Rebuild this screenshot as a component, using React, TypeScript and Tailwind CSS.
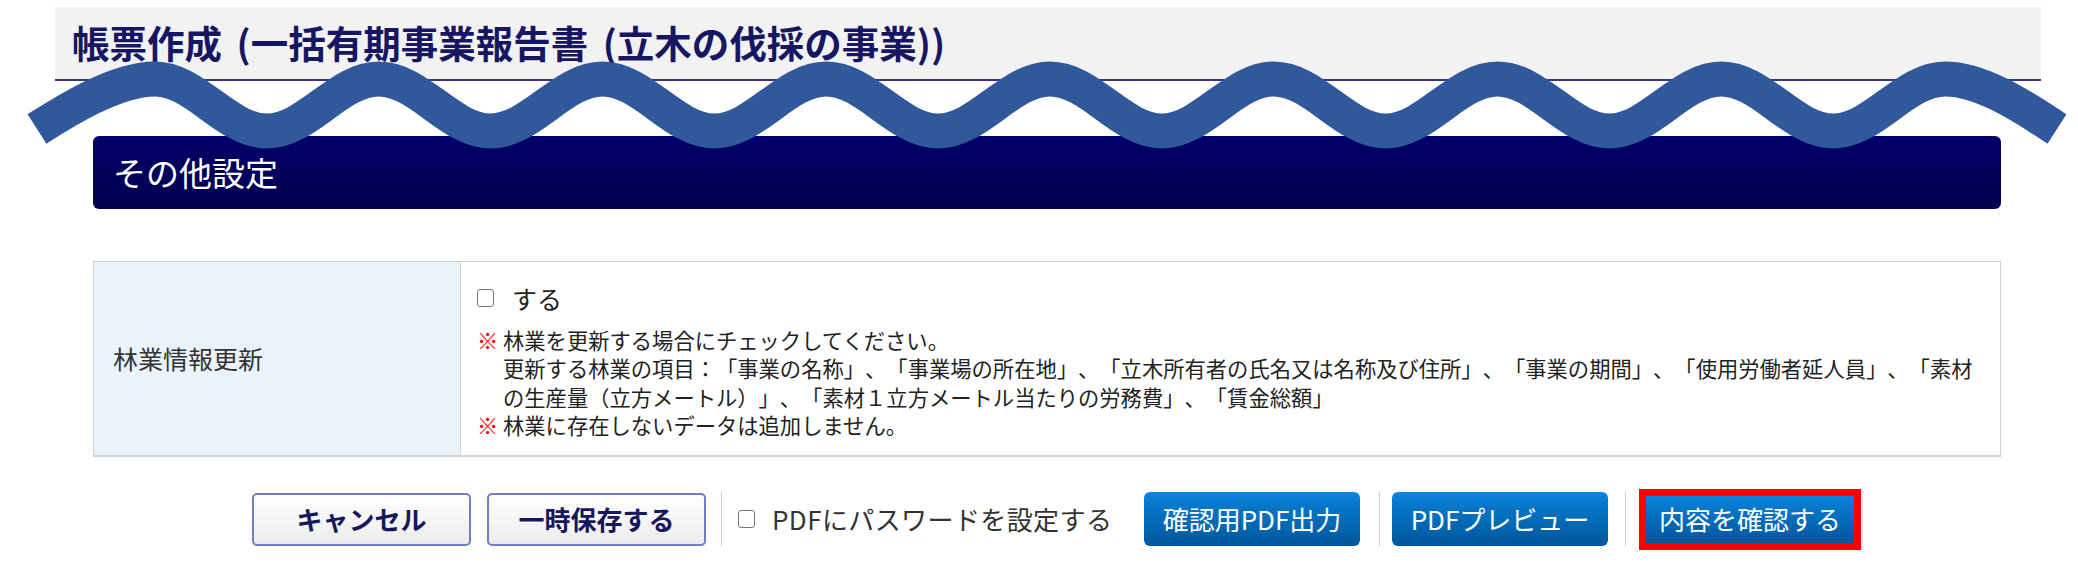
import React from "react";

const jp = { fontFamily: '"Noto Sans CJK JP", "Noto Sans", sans-serif' };

// wave drawn across the header (cut mark)
const buildWave = () => {
  const peaks = Array.from({ length: 9 }, (_, i) => 155 + 223.75 * i);
  let d = "M 37 129 C 62 113, 115 79, 155 79";
  for (let i = 0; i < 8; i++) {
    const p = peaks[i];
    const t = p + 111.875;
    const n = peaks[i + 1];
    d += ` C ${p + 40.6} 79, ${t - 40.6} 131, ${t} 131 C ${t + 40.6} 131, ${n - 40.6} 79, ${n} 79`;
  }
  d += " C 1985 79, 2032 113, 2057 129";
  return d;
};

const Wave = () => (
  <svg
    className="absolute left-0 top-0 pointer-events-none"
    width="2078"
    height="200"
    viewBox="0 0 2078 200"
  >
    <path d={buildWave()} fill="none" stroke="#30589a" strokeWidth="35" strokeLinecap="butt" />
  </svg>
);

const Box = () => (
  <span className="inline-block w-[17px] h-[18px] border border-[#767676] rounded-[3px] bg-white shrink-0" />
);

const GrayButton = ({ label }: { label: string }) => (
  <button className="w-[219px] h-[53px] rounded-[5px] border-2 border-[#6f7fc6] bg-gradient-to-b from-white to-[#ececec] text-[26px] font-bold text-[#17175e] leading-none shrink-0">
    {label}
  </button>
);

const BlueButton = ({ label, className = "" }: { label: string; className?: string }) => (
  <button
    className={`h-[54px] w-[216px] rounded-[6px] bg-gradient-to-b from-[#0a83dc] to-[#00569a] text-[26px] text-white leading-none shrink-0 ${className}`}
  >
    {label}
  </button>
);

const Sep = () => <span className="w-px h-[54px] bg-[#cfcfcf] shrink-0" />;

export default function App() {
  return (
    <div className="relative w-[2078px] min-h-[585px] bg-white pt-[7px] [text-spacing-trim:space-all]" style={jp}>
      {/* page title */}
      <div className="ml-[55px] w-[1986px] h-[74px] bg-[#f2f2f2] border-b-2 border-[#35358a] flex items-center pl-[17px] pb-[2px]">
        <h1 className="text-[37.5px] font-bold text-[#161663] leading-none [word-spacing:6px]">
          帳票作成 (一括有期事業報告書 (立木の伐採の事業))
        </h1>
      </div>

      {/* section header */}
      <div className="ml-[93px] mt-[55px] w-[1908px] h-[73px] rounded-[6px] bg-gradient-to-b from-[#00006a] to-[#00004e] flex items-center pl-[20px]">
        <h2 className="text-[33px] text-white leading-none">その他設定</h2>
      </div>

      {/* settings table */}
      <div className="ml-[93px] mt-[52px] w-[1908px] flex border border-[#d4d4d4] border-b-2">
        <div className="w-[367px] shrink-0 bg-[#eaf3fc] border-r border-[#d4d4d4] flex items-center pl-[19px]">
          <span className="text-[25px] text-[#333]">林業情報更新</span>
        </div>
        <div className="flex-1 pl-[16px] pr-[16px] pt-[18px] pb-[15px] text-[#222]">
          <label className="flex items-center gap-[18px] h-[36px]">
            <Box />
            <span className="text-[25px] leading-none">する</span>
          </label>
          <div className="mt-[10px] text-[21.3px] leading-[28.4px]">
            <div className="flex">
              <span className="w-[26px] shrink-0 text-[#ff0000] font-bold">※</span>
              <div>
                <div>林業を更新する場合にチェックしてください。</div>
                <div>
                  更新する林業の項目：「事業の名称」、「事業場の所在地」、「立木所有者の氏名又は名称及び住所」、「事業の期間」、「使用労働者延人員」、「素材の生産量（立方メートル）」、「素材１立方メートル当たりの労務費」、「賃金総額」
                </div>
              </div>
            </div>
            <div className="flex">
              <span className="w-[26px] shrink-0 text-[#ff0000] font-bold">※</span>
              <div>林業に存在しないデータは追加しません。</div>
            </div>
          </div>
        </div>
      </div>

      {/* actions */}
      <div className="ml-[252px] mt-[32px] flex items-center h-[61px]">
        <GrayButton label="キャンセル" />
        <div className="ml-[16px]">
          <GrayButton label="一時保存する" />
        </div>
        <div className="ml-[15px] flex">
          <Sep />
        </div>
        <label className="ml-[16px] flex items-center">
          <Box />
          <span className="ml-[17px] w-[342px] text-[26px] tracking-[0.4px] text-[#333] leading-none whitespace-nowrap">
            PDFにパスワードを設定する
          </span>
        </label>
        <BlueButton label="確認用PDF出力" className="ml-[30px]" />
        <div className="ml-[19px] flex">
          <Sep />
        </div>
        <BlueButton label="PDFプレビュー" className="ml-[12px]" />
        <div className="ml-[17px] flex">
          <Sep />
        </div>
        <div className="ml-[13px] p-[7px] bg-[#ff0000] shrink-0">
          <button className="block w-[208px] h-[47px] bg-gradient-to-b from-[#0a83dc] to-[#00569a] text-[26px] text-white leading-none">
            内容を確認する
          </button>
        </div>
      </div>

      <Wave />
    </div>
  );
}
